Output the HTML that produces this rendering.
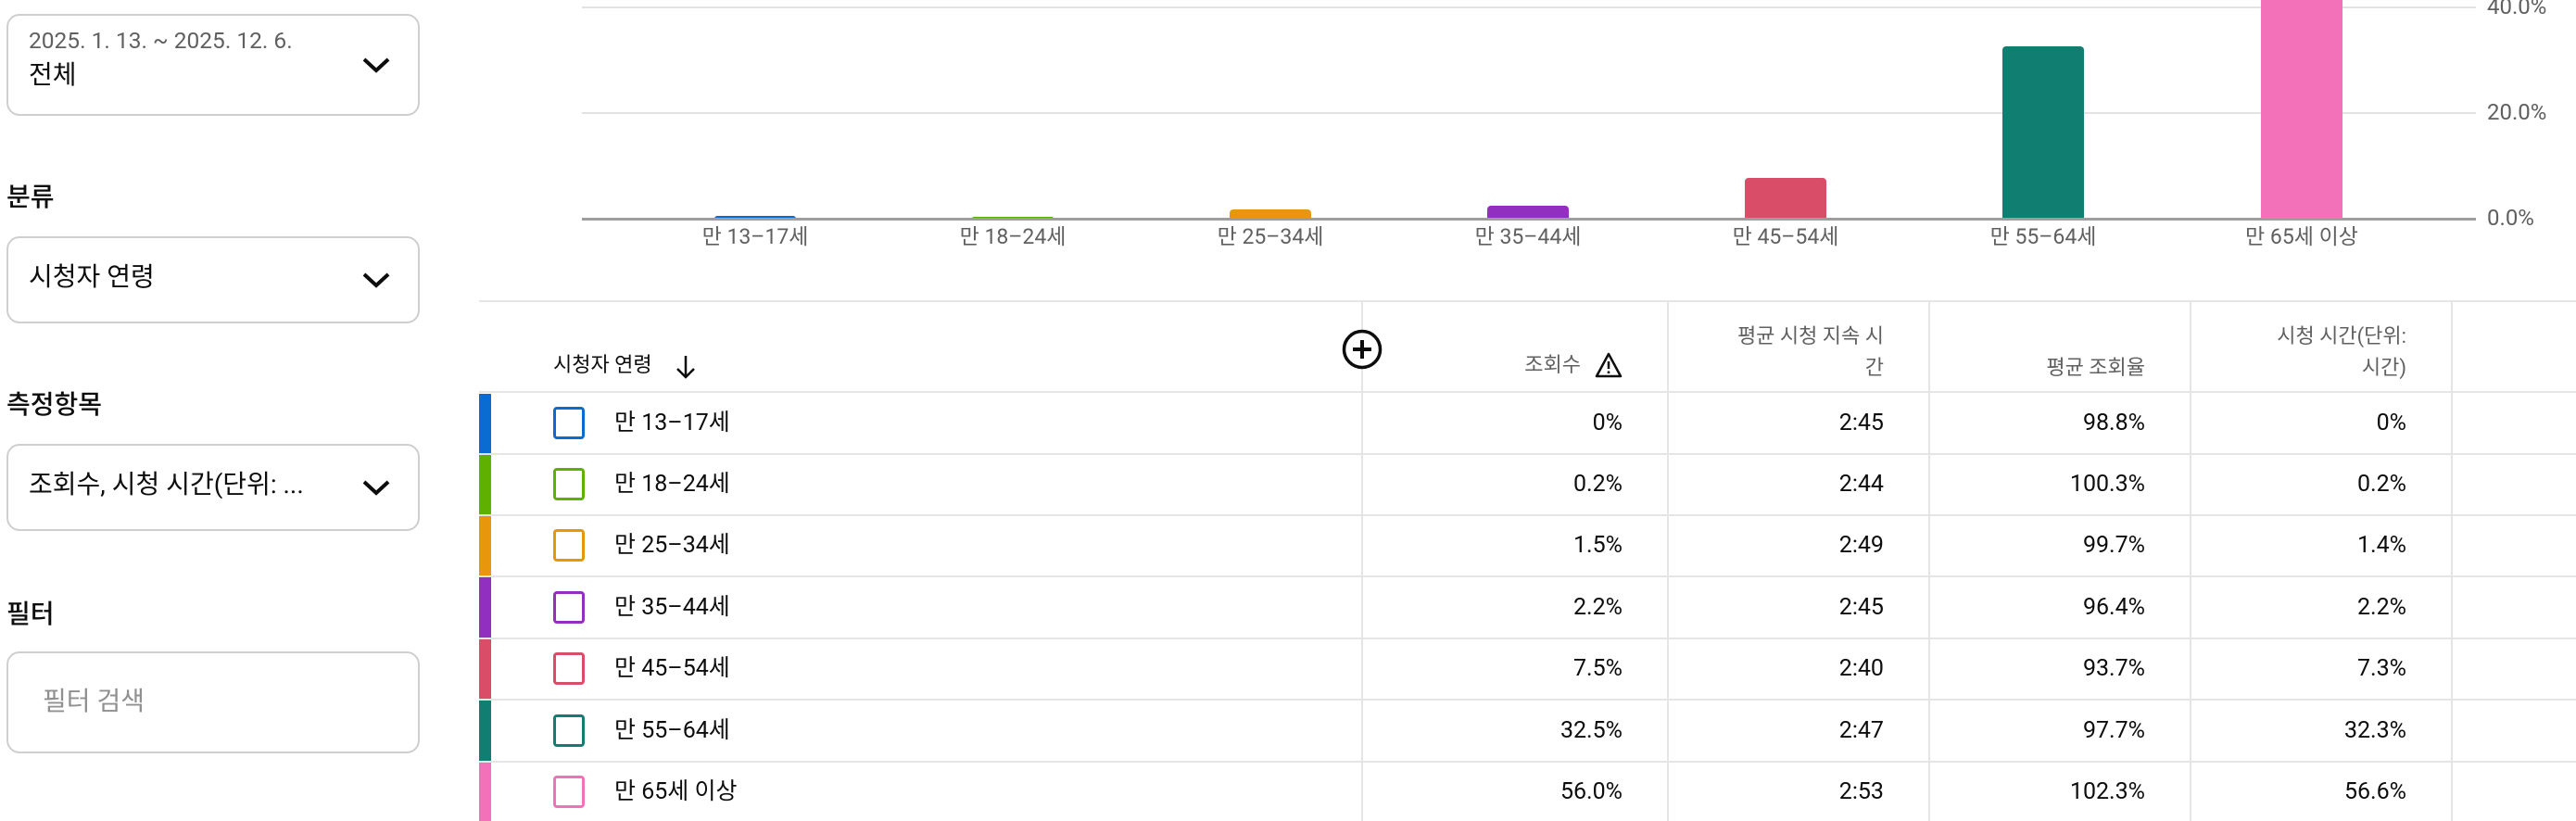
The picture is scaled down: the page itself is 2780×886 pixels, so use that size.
<!DOCTYPE html>
<html><head><meta charset="utf-8">
<style>
*{margin:0;padding:0;box-sizing:border-box}
body{width:2780px;height:886px;overflow:hidden;background:#fff;font-family:"Roboto","Liberation Sans","Noto Sans CJK KR",sans-serif;color:#0d0d0d;position:relative}
.a{position:absolute;white-space:nowrap}
.box{position:absolute;left:7px;width:446px;border:2px solid #cfcfcf;border-radius:14px}
.lbl{position:absolute;left:7px;font-size:28px;font-weight:500;line-height:34px}
.chev{position:absolute;left:390px;width:32px;height:20px}
.gl{position:absolute;left:628px;width:2044px;height:2px;background:#e3e3e3}
.bar{position:absolute;width:88px;border-radius:4px 4px 0 0}
.xl{position:absolute;top:240px;font-size:23px;color:#606060;width:200px;text-align:center;line-height:32px}
.yl{position:absolute;left:2684px;font-size:24px;color:#606060;line-height:30px}
.hl{position:absolute;height:2px;left:517px;width:2263px;background:#e5e5e5}
.vl{position:absolute;width:2px;top:325px;height:561px;background:#e5e5e5}
.cb{position:absolute;left:597px;width:34px;height:35px;border:3px solid;border-radius:4px}
.cs{position:absolute;left:517px;width:13px}
.tx{position:absolute;left:663px;font-size:25px;line-height:30px}
.n{position:absolute;font-size:25px;line-height:30px;text-align:right;width:200px}
.h{position:absolute;font-size:22px;color:#606060;line-height:34px;text-align:right}
</style></head><body>

<div class="box" style="top:15px;height:110px"></div>
<div class="a" style="left:31px;top:29px;font-size:24.5px;color:#606060;line-height:30px">2025. 1. 13. ~ 2025. 12. 6.</div>
<div class="a" style="left:31px;top:64px;font-size:28px;line-height:34px">전체</div>
<svg class="chev" style="top:60px" viewBox="0 0 32 20"><path d="M3 4 L16 16 L29 4" fill="none" stroke="#0d0d0d" stroke-width="4"/></svg>

<div class="lbl" style="top:196px">분류</div>
<div class="box" style="top:255px;height:94px"></div>
<div class="a" style="left:31px;top:282px;font-size:28px;line-height:34px">시청자 연령</div>
<svg class="chev" style="top:292px" viewBox="0 0 32 20"><path d="M3 4 L16 16 L29 4" fill="none" stroke="#0d0d0d" stroke-width="4"/></svg>

<div class="lbl" style="top:420px">측정항목</div>
<div class="box" style="top:479px;height:94px"></div>
<div class="a" style="left:31px;top:506px;font-size:28px;line-height:34px">조회수, 시청 시간(단위: ...</div>
<svg class="chev" style="top:516px" viewBox="0 0 32 20"><path d="M3 4 L16 16 L29 4" fill="none" stroke="#0d0d0d" stroke-width="4"/></svg>

<div class="lbl" style="top:646px">필터</div>
<div class="box" style="top:703px;height:110px"></div>
<div class="a" style="left:46px;top:740px;font-size:28px;color:#909090;line-height:34px">필터 검색</div>

<!-- chart -->
<div class="gl" style="top:7px"></div>
<div class="gl" style="top:121px"></div>
<div class="bar" style="left:771px;top:233px;height:3px;background:#0a6cd0"></div>
<div class="bar" style="left:1049px;top:234px;height:2px;background:#5fb000"></div>
<div class="bar" style="left:1327px;top:226px;height:10px;background:#e8960c"></div>
<div class="bar" style="left:1605px;top:222px;height:14px;background:#912fc0"></div>
<div class="bar" style="left:1883px;top:192px;height:44px;background:#da4d69"></div>
<div class="bar" style="left:2161px;top:50px;height:186px;background:#107f71"></div>
<div class="bar" style="left:2440px;top:0;height:236px;background:#f271b9;border-radius:0"></div>
<div class="gl" style="top:235px;background:#9e9e9e;height:3px"></div>
<div class="yl" style="top:-8px">40.0%</div>
<div class="yl" style="top:106px">20.0%</div>
<div class="yl" style="top:220px">0.0%</div>
<div class="xl" style="left:715px">만 13–17세</div>
<div class="xl" style="left:993px">만 18–24세</div>
<div class="xl" style="left:1271px">만 25–34세</div>
<div class="xl" style="left:1549px">만 35–44세</div>
<div class="xl" style="left:1827px">만 45–54세</div>
<div class="xl" style="left:2105px">만 55–64세</div>
<div class="xl" style="left:2384px">만 65세 이상</div>

<!-- table -->
<div class="hl" style="top:324px"></div>
<div class="hl" style="top:422px"></div>
<div class="hl" style="top:489px"></div>
<div class="hl" style="top:555px"></div>
<div class="hl" style="top:621px"></div>
<div class="hl" style="top:688px"></div>
<div class="hl" style="top:754px"></div>
<div class="hl" style="top:821px"></div>
<div class="vl" style="left:1469px"></div>
<div class="vl" style="left:1799px"></div>
<div class="vl" style="left:2081px"></div>
<div class="vl" style="left:2363px"></div>
<div class="vl" style="left:2645px"></div>

<div class="a" style="left:597px;top:378px;font-size:22px;line-height:34px">시청자 연령</div>
<svg class="a" style="left:728px;top:382px" width="24" height="28" viewBox="0 0 24 28"><path d="M12 2 V25 M3 16 L12 25 L21 16" fill="none" stroke="#0d0d0d" stroke-width="2.5"/></svg>
<svg class="a" style="left:1448px;top:355px" width="44" height="44" viewBox="0 0 44 44"><circle cx="22" cy="22" r="19.5" fill="#fff" stroke="#0d0d0d" stroke-width="3.5"/><path d="M22 12 V32 M12 22 H32" stroke="#0d0d0d" stroke-width="4"/></svg>
<div class="h" style="left:1500px;width:206px;top:378px">조회수</div>
<svg class="a" style="left:1721px;top:380px" width="30" height="28" viewBox="0 0 30 28"><path d="M15 2 L28 26 H2 Z" fill="none" stroke="#0d0d0d" stroke-width="2.5" stroke-linejoin="round"/><path d="M15 10 V18 M15 20.5 V23" stroke="#0d0d0d" stroke-width="2.5"/></svg>
<div class="h" style="left:1810px;width:223px;top:347px">평균 시청 지속 시<br>간</div>
<div class="h" style="left:2090px;width:225px;top:381px">평균 조회율</div>
<div class="h" style="left:2372px;width:225px;top:347px">시청 시간(단위:<br>시간)</div>

<div class="cs" style="top:425px;height:64px;background:#0a6cd0"></div>
<div class="cs" style="top:491px;height:64px;background:#5fb000"></div>
<div class="cs" style="top:557px;height:64px;background:#e8960c"></div>
<div class="cs" style="top:623px;height:65px;background:#912fc0"></div>
<div class="cs" style="top:690px;height:64px;background:#da4d69"></div>
<div class="cs" style="top:756px;height:65px;background:#107f71"></div>
<div class="cs" style="top:823px;height:63px;background:#f271b9"></div>

<div class="cb" style="top:439px;border-color:#0a6cd0"></div>
<div class="cb" style="top:505px;border-color:#5fb000"></div>
<div class="cb" style="top:571px;border-color:#e8960c"></div>
<div class="cb" style="top:638px;border-color:#912fc0"></div>
<div class="cb" style="top:704px;border-color:#da4d69"></div>
<div class="cb" style="top:771px;border-color:#107f71"></div>
<div class="cb" style="top:837px;border-color:#f271b9"></div>

<div class="tx" style="top:442px">만 13–17세</div>
<div class="tx" style="top:508px">만 18–24세</div>
<div class="tx" style="top:574px">만 25–34세</div>
<div class="tx" style="top:641px">만 35–44세</div>
<div class="tx" style="top:707px">만 45–54세</div>
<div class="tx" style="top:774px">만 55–64세</div>
<div class="tx" style="top:840px">만 65세 이상</div>

<div class="n" style="left:1551px;top:442px">0%</div>
<div class="n" style="left:1551px;top:508px">0.2%</div>
<div class="n" style="left:1551px;top:574px">1.5%</div>
<div class="n" style="left:1551px;top:641px">2.2%</div>
<div class="n" style="left:1551px;top:707px">7.5%</div>
<div class="n" style="left:1551px;top:774px">32.5%</div>
<div class="n" style="left:1551px;top:840px">56.0%</div>

<div class="n" style="left:1833px;top:442px">2:45</div>
<div class="n" style="left:1833px;top:508px">2:44</div>
<div class="n" style="left:1833px;top:574px">2:49</div>
<div class="n" style="left:1833px;top:641px">2:45</div>
<div class="n" style="left:1833px;top:707px">2:40</div>
<div class="n" style="left:1833px;top:774px">2:47</div>
<div class="n" style="left:1833px;top:840px">2:53</div>

<div class="n" style="left:2115px;top:442px">98.8%</div>
<div class="n" style="left:2115px;top:508px">100.3%</div>
<div class="n" style="left:2115px;top:574px">99.7%</div>
<div class="n" style="left:2115px;top:641px">96.4%</div>
<div class="n" style="left:2115px;top:707px">93.7%</div>
<div class="n" style="left:2115px;top:774px">97.7%</div>
<div class="n" style="left:2115px;top:840px">102.3%</div>

<div class="n" style="left:2397px;top:442px">0%</div>
<div class="n" style="left:2397px;top:508px">0.2%</div>
<div class="n" style="left:2397px;top:574px">1.4%</div>
<div class="n" style="left:2397px;top:641px">2.2%</div>
<div class="n" style="left:2397px;top:707px">7.3%</div>
<div class="n" style="left:2397px;top:774px">32.3%</div>
<div class="n" style="left:2397px;top:840px">56.6%</div>
</body></html>
